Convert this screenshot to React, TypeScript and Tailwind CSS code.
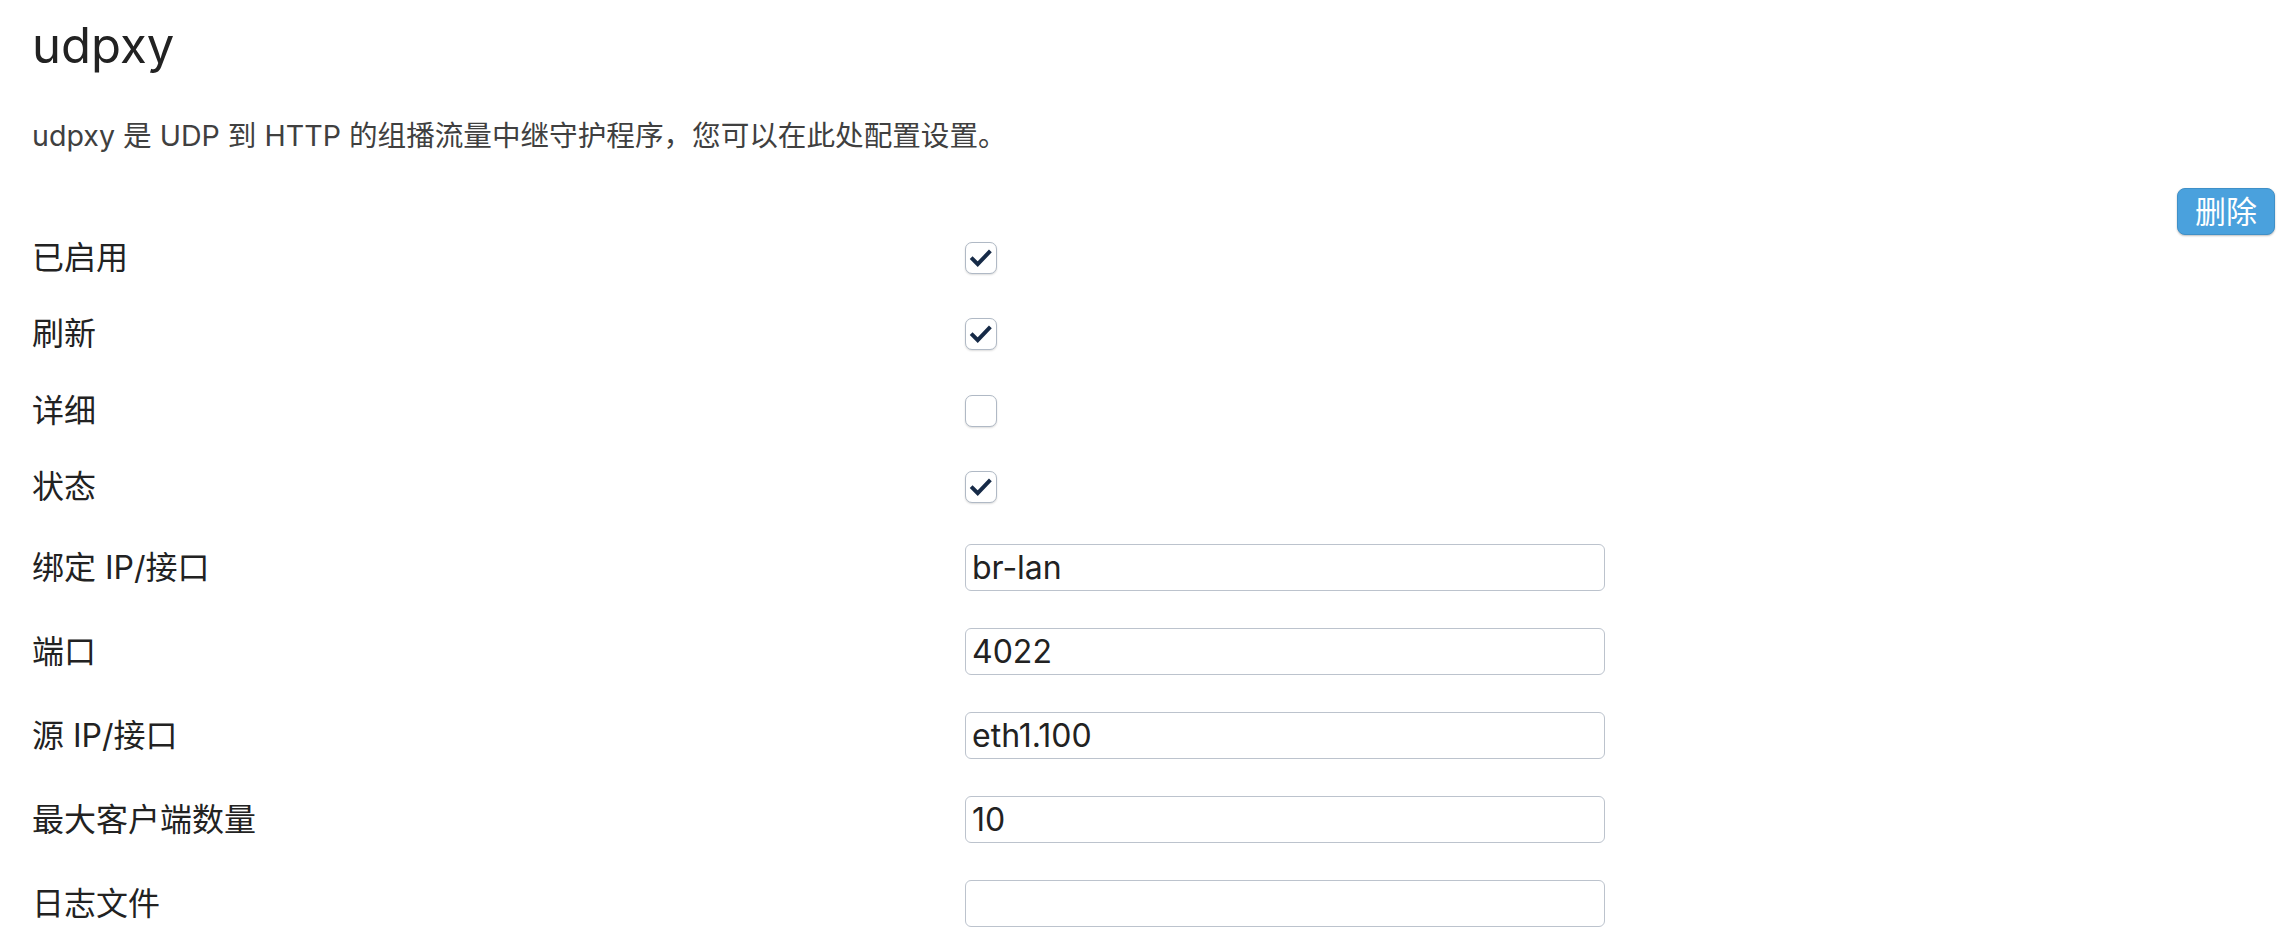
const checkRows: [string, boolean][] = [
  ['已启用', true],
  ['刷新', true],
  ['详细', false],
  ['状态', true],
];

const inputRows: [string, string][] = [
  ['绑定 IP/接口', 'br-lan'],
  ['端口', '4022'],
  ['源 IP/接口', 'eth1.100'],
  ['最大客户端数量', '10'],
  ['日志文件', ''],
];

const CheckBox = ({ checked }: { checked: boolean }) => (
  <div className="w-[32px] h-[32px] rounded-[7px] border-[1.5px] border-[#b0b9c5] bg-white shadow-[0_1px_2px_rgba(0,0,0,0.14)] flex items-center justify-center">
    {checked && (
      <svg width="32" height="32" viewBox="0 0 32 32" fill="none">
        <polyline points="5.5,15.5 12.5,22.5 26,8.5" stroke="#162a47" strokeWidth="4.2" strokeLinejoin="miter" />
      </svg>
    )}
  </div>
);

export default function App() {
  return (
    <div className="min-h-screen bg-white pl-[32px] pr-[17px] pt-[19px] font-[Inter,'Noto_Sans_CJK_SC',sans-serif] text-[#222]">
      <h2 className="text-[49px] leading-[54px] font-normal text-[#222]">udpxy</h2>
      <p className="mt-[43px] text-[28.6px] leading-[40px] text-[#404040]">
        udpxy 是 UDP 到 HTTP 的组播流量中继守护程序，您可以在此处配置设置。
      </p>

      <div className="mt-[32px] flex justify-end">
        <button className="-mb-[15.5px] h-[47px] px-[17px] rounded-[8px] border border-[#3f90c8] bg-[#4aa1dd] text-white text-[31px] leading-none shadow-[0_1px_2px_rgba(0,0,0,0.25)]">
          删除
        </button>
      </div>

      <div>
        {/* 复选框 */}
        {checkRows.map(([label, on]) => (
          <div key={label} className="flex items-center h-[76.5px]">
            <div className="w-[933px] text-[32px] leading-[44px] text-[#222]">{label}</div>
            <CheckBox checked={on} />
          </div>
        ))}

        {/* 输入框 */}
        {inputRows.map(([label, value]) => (
          <div key={label} className="flex items-center h-[84px]">
            <div className="w-[933px] text-[32px] leading-[44px] text-[#222]">{label}</div>
            <input
              readOnly
              value={value}
              className="w-[640px] h-[47px] rounded-[6px] border border-[#bcc3cd] bg-white px-[6px] text-[32px] text-[#222] outline-none"
            />
          </div>
        ))}
      </div>
    </div>
  );
}
